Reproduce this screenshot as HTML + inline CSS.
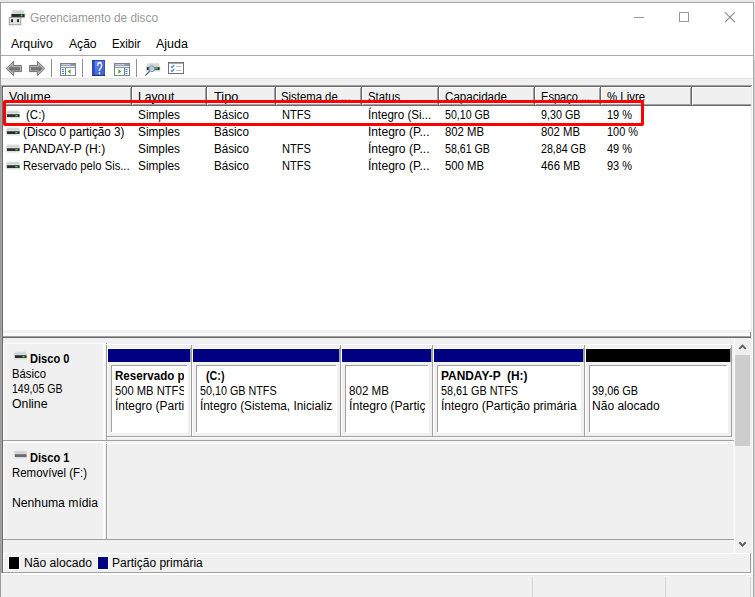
<!DOCTYPE html>
<html lang="pt-BR"><head><meta charset="utf-8"><title>Gerenciamento de disco</title>
<style>
html,body{margin:0;padding:0}
body{width:755px;height:597px;position:relative;overflow:hidden;background:#f0f0f0;font-family:"Liberation Sans", sans-serif;font-size:12px}
body>div,body>svg{position:absolute}
.t{line-height:16px;height:16px;white-space:pre}
</style></head><body>
<div style="left:0px;top:0px;width:755px;height:2px;background:#e6e6e6;"></div>
<div style="left:0px;top:2px;width:754px;height:1px;background:#a8a8a8;"></div>
<div style="left:1px;top:3px;width:752px;height:52px;background:#fff;"></div>
<div style="left:1px;top:55px;width:752px;height:1px;background:#a9a9a9;"></div>
<div style="left:1px;top:56px;width:752px;height:22px;background:#fff;"></div>
<div style="left:1px;top:78px;width:752px;height:1px;background:#e2e2e2;"></div>
<div style="left:0px;top:2px;width:1px;height:595px;background:#9a9a9a;"></div>
<div style="left:753px;top:2px;width:1px;height:595px;background:#a8a8a8;"></div>
<div style="left:754px;top:0px;width:1px;height:597px;background:#e9e9e9;"></div>
<div style="left:754px;top:60px;width:1px;height:537px;background:#cccccc;"></div>
<div style="left:752px;top:79px;width:1px;height:518px;background:#fbfbfb;"></div>
<div style="left:1px;top:85px;width:1px;height:488px;background:#a8a8a8;"></div>
<div style="left:2px;top:86px;width:1px;height:487px;background:#696969;"></div>
<div style="left:1px;top:85px;width:751px;height:1px;background:#a0a0a0;"></div>
<div style="left:2px;top:86px;width:749px;height:1px;background:#696969;"></div>
<div style="left:3px;top:87px;width:748px;height:243px;background:#fff;"></div>
<div style="left:751px;top:87px;width:1px;height:249px;background:#e8e8e8;"></div>
<div style="left:3px;top:87px;width:129px;height:19px;background:#f0f0f0;"></div>
<div style="left:3px;top:87px;width:129px;height:1px;background:#fff;"></div>
<div style="left:3px;top:87px;width:1px;height:19px;background:#fff;"></div>
<div style="left:4px;top:104px;width:128px;height:1px;background:#a0a0a0;"></div>
<div style="left:3px;top:105px;width:129px;height:1px;background:#696969;"></div>
<div style="left:130px;top:88px;width:1px;height:17px;background:#a0a0a0;"></div>
<div style="left:131px;top:87px;width:1px;height:19px;background:#696969;"></div>
<div style="left:132px;top:87px;width:75px;height:19px;background:#f0f0f0;"></div>
<div style="left:132px;top:87px;width:75px;height:1px;background:#fff;"></div>
<div style="left:132px;top:87px;width:1px;height:19px;background:#fff;"></div>
<div style="left:133px;top:104px;width:74px;height:1px;background:#a0a0a0;"></div>
<div style="left:132px;top:105px;width:75px;height:1px;background:#696969;"></div>
<div style="left:205px;top:88px;width:1px;height:17px;background:#a0a0a0;"></div>
<div style="left:206px;top:87px;width:1px;height:19px;background:#696969;"></div>
<div style="left:207px;top:87px;width:69px;height:19px;background:#f0f0f0;"></div>
<div style="left:207px;top:87px;width:69px;height:1px;background:#fff;"></div>
<div style="left:207px;top:87px;width:1px;height:19px;background:#fff;"></div>
<div style="left:208px;top:104px;width:68px;height:1px;background:#a0a0a0;"></div>
<div style="left:207px;top:105px;width:69px;height:1px;background:#696969;"></div>
<div style="left:274px;top:88px;width:1px;height:17px;background:#a0a0a0;"></div>
<div style="left:275px;top:87px;width:1px;height:19px;background:#696969;"></div>
<div style="left:276px;top:87px;width:86px;height:19px;background:#f0f0f0;"></div>
<div style="left:276px;top:87px;width:86px;height:1px;background:#fff;"></div>
<div style="left:276px;top:87px;width:1px;height:19px;background:#fff;"></div>
<div style="left:277px;top:104px;width:85px;height:1px;background:#a0a0a0;"></div>
<div style="left:276px;top:105px;width:86px;height:1px;background:#696969;"></div>
<div style="left:360px;top:88px;width:1px;height:17px;background:#a0a0a0;"></div>
<div style="left:361px;top:87px;width:1px;height:19px;background:#696969;"></div>
<div style="left:362px;top:87px;width:77px;height:19px;background:#f0f0f0;"></div>
<div style="left:362px;top:87px;width:77px;height:1px;background:#fff;"></div>
<div style="left:362px;top:87px;width:1px;height:19px;background:#fff;"></div>
<div style="left:363px;top:104px;width:76px;height:1px;background:#a0a0a0;"></div>
<div style="left:362px;top:105px;width:77px;height:1px;background:#696969;"></div>
<div style="left:437px;top:88px;width:1px;height:17px;background:#a0a0a0;"></div>
<div style="left:438px;top:87px;width:1px;height:19px;background:#696969;"></div>
<div style="left:439px;top:87px;width:96px;height:19px;background:#f0f0f0;"></div>
<div style="left:439px;top:87px;width:96px;height:1px;background:#fff;"></div>
<div style="left:439px;top:87px;width:1px;height:19px;background:#fff;"></div>
<div style="left:440px;top:104px;width:95px;height:1px;background:#a0a0a0;"></div>
<div style="left:439px;top:105px;width:96px;height:1px;background:#696969;"></div>
<div style="left:533px;top:88px;width:1px;height:17px;background:#a0a0a0;"></div>
<div style="left:534px;top:87px;width:1px;height:19px;background:#696969;"></div>
<div style="left:535px;top:87px;width:66px;height:19px;background:#f0f0f0;"></div>
<div style="left:535px;top:87px;width:66px;height:1px;background:#fff;"></div>
<div style="left:535px;top:87px;width:1px;height:19px;background:#fff;"></div>
<div style="left:536px;top:104px;width:65px;height:1px;background:#a0a0a0;"></div>
<div style="left:535px;top:105px;width:66px;height:1px;background:#696969;"></div>
<div style="left:599px;top:88px;width:1px;height:17px;background:#a0a0a0;"></div>
<div style="left:600px;top:87px;width:1px;height:19px;background:#696969;"></div>
<div style="left:601px;top:87px;width:91px;height:19px;background:#f0f0f0;"></div>
<div style="left:601px;top:87px;width:91px;height:1px;background:#fff;"></div>
<div style="left:601px;top:87px;width:1px;height:19px;background:#fff;"></div>
<div style="left:602px;top:104px;width:90px;height:1px;background:#a0a0a0;"></div>
<div style="left:601px;top:105px;width:91px;height:1px;background:#696969;"></div>
<div style="left:690px;top:88px;width:1px;height:17px;background:#a0a0a0;"></div>
<div style="left:691px;top:87px;width:1px;height:19px;background:#696969;"></div>
<div style="left:692px;top:87px;width:59px;height:19px;background:#f0f0f0;"></div>
<div style="left:692px;top:87px;width:59px;height:1px;background:#fff;"></div>
<div style="left:692px;top:87px;width:1px;height:19px;background:#fff;"></div>
<div style="left:693px;top:104px;width:58px;height:1px;background:#a0a0a0;"></div>
<div style="left:692px;top:105px;width:59px;height:1px;background:#696969;"></div>
<div style="left:3px;top:330px;width:748px;height:3px;background:#f0f0f0;"></div>
<div style="left:3px;top:333px;width:747px;height:3px;background:#fafafa;"></div>
<div style="left:750px;top:332px;width:1px;height:6px;background:#8c8c8c;"></div>
<div style="left:3px;top:336px;width:748px;height:1px;background:#a0a0a0;"></div>
<div style="left:3px;top:337px;width:748px;height:1px;background:#696969;"></div>
<div style="left:3px;top:343px;width:102px;height:1px;background:#fff;"></div>
<div style="left:3px;top:343px;width:1px;height:97px;background:#fff;"></div>
<div style="left:103px;top:343px;width:2px;height:97px;background:#fff;"></div>
<div style="left:106px;top:345px;width:1px;height:96px;background:#a0a0a0;"></div>
<div style="left:106px;top:343px;width:1px;height:1px;background:#a0a0a0;"></div>
<div style="left:107px;top:344px;width:627px;height:1px;background:#fff;"></div>
<div style="left:3px;top:442px;width:102px;height:1px;background:#fff;"></div>
<div style="left:3px;top:442px;width:1px;height:97px;background:#fff;"></div>
<div style="left:103px;top:442px;width:2px;height:97px;background:#fff;"></div>
<div style="left:106px;top:444px;width:1px;height:96px;background:#a0a0a0;"></div>
<div style="left:106px;top:442px;width:1px;height:1px;background:#a0a0a0;"></div>
<div style="left:107px;top:443px;width:627px;height:1px;background:#fff;"></div>
<div style="left:3px;top:440px;width:731px;height:1px;background:#a0a0a0;"></div>
<div style="left:3px;top:441px;width:731px;height:1px;background:#f8f8f8;"></div>
<div style="left:3px;top:539px;width:731px;height:1px;background:#a0a0a0;"></div>
<div style="left:107px;top:444px;width:1px;height:95px;background:#f8f8f8;"></div>
<div style="left:106px;top:345px;width:1px;height:92px;background:#a0a0a0;"></div>
<div style="left:107px;top:344px;width:1px;height:92px;background:#fff;"></div>
<div style="left:107px;top:348px;width:84px;height:1px;background:#fff;"></div>
<div style="left:108px;top:349px;width:82px;height:13px;background:#000080;"></div>
<div style="left:190px;top:348px;width:1px;height:14px;background:#a0a0a0;"></div>
<div style="left:108px;top:362px;width:82px;height:1px;background:#f5f5f5;"></div>
<div style="left:111px;top:365px;width:77px;height:68px;background:#fff;"></div>
<div style="left:111px;top:365px;width:76px;height:1px;background:#a0a0a0;"></div>
<div style="left:111px;top:365px;width:1px;height:67px;background:#a0a0a0;"></div>
<div style="left:191px;top:345px;width:1px;height:92px;background:#a0a0a0;"></div>
<div style="left:192px;top:344px;width:1px;height:92px;background:#fff;"></div>
<div style="left:192px;top:348px;width:148px;height:1px;background:#fff;"></div>
<div style="left:193px;top:349px;width:146px;height:13px;background:#000080;"></div>
<div style="left:339px;top:348px;width:1px;height:14px;background:#a0a0a0;"></div>
<div style="left:193px;top:362px;width:146px;height:1px;background:#f5f5f5;"></div>
<div style="left:196px;top:365px;width:141px;height:68px;background:#fff;"></div>
<div style="left:196px;top:365px;width:140px;height:1px;background:#a0a0a0;"></div>
<div style="left:196px;top:365px;width:1px;height:67px;background:#a0a0a0;"></div>
<div style="left:340px;top:345px;width:1px;height:92px;background:#a0a0a0;"></div>
<div style="left:341px;top:344px;width:1px;height:92px;background:#fff;"></div>
<div style="left:341px;top:348px;width:91px;height:1px;background:#fff;"></div>
<div style="left:342px;top:349px;width:89px;height:13px;background:#000080;"></div>
<div style="left:431px;top:348px;width:1px;height:14px;background:#a0a0a0;"></div>
<div style="left:342px;top:362px;width:89px;height:1px;background:#f5f5f5;"></div>
<div style="left:345px;top:365px;width:84px;height:68px;background:#fff;"></div>
<div style="left:345px;top:365px;width:83px;height:1px;background:#a0a0a0;"></div>
<div style="left:345px;top:365px;width:1px;height:67px;background:#a0a0a0;"></div>
<div style="left:432px;top:345px;width:1px;height:92px;background:#a0a0a0;"></div>
<div style="left:433px;top:344px;width:1px;height:92px;background:#fff;"></div>
<div style="left:433px;top:348px;width:151px;height:1px;background:#fff;"></div>
<div style="left:434px;top:349px;width:149px;height:13px;background:#000080;"></div>
<div style="left:583px;top:348px;width:1px;height:14px;background:#a0a0a0;"></div>
<div style="left:434px;top:362px;width:149px;height:1px;background:#f5f5f5;"></div>
<div style="left:437px;top:365px;width:144px;height:68px;background:#fff;"></div>
<div style="left:437px;top:365px;width:143px;height:1px;background:#a0a0a0;"></div>
<div style="left:437px;top:365px;width:1px;height:67px;background:#a0a0a0;"></div>
<div style="left:584px;top:345px;width:1px;height:92px;background:#a0a0a0;"></div>
<div style="left:585px;top:344px;width:1px;height:92px;background:#fff;"></div>
<div style="left:585px;top:348px;width:146px;height:1px;background:#fff;"></div>
<div style="left:586px;top:349px;width:144px;height:13px;background:#000;"></div>
<div style="left:730px;top:348px;width:1px;height:14px;background:#a0a0a0;"></div>
<div style="left:586px;top:362px;width:144px;height:1px;background:#f5f5f5;"></div>
<div style="left:589px;top:365px;width:139px;height:68px;background:#fff;"></div>
<div style="left:589px;top:365px;width:138px;height:1px;background:#a0a0a0;"></div>
<div style="left:589px;top:365px;width:1px;height:67px;background:#a0a0a0;"></div>
<div style="left:731px;top:345px;width:1px;height:92px;background:#a0a0a0;"></div>
<div style="left:106px;top:436px;width:626px;height:1px;background:#a0a0a0;"></div>
<div style="left:107px;top:437px;width:624px;height:1px;background:#fff;"></div>
<div style="left:734px;top:338px;width:1px;height:215px;background:#fff;"></div>
<div style="left:735px;top:338px;width:17px;height:215px;background:#f0f0f0;"></div>
<div style="left:735px;top:355px;width:15px;height:91px;background:#cdcdcd;"></div>
<svg style="left:737px;top:343px" width="11" height="8" viewBox="0 0 11 8"><path d="M2.3 5.9 L5.5 2.6 L8.7 5.9" fill="none" stroke="#606060" stroke-width="2"/></svg>
<svg style="left:737px;top:540px" width="11" height="8" viewBox="0 0 11 8"><path d="M2.3 2.3 L5.5 5.6 L8.7 2.3" fill="none" stroke="#606060" stroke-width="2"/></svg>
<div style="left:3px;top:553px;width:748px;height:1px;background:#fff;"></div>
<div style="left:3px;top:553px;width:1px;height:19px;background:#fff;"></div>
<div style="left:750px;top:553px;width:1px;height:20px;background:#a0a0a0;"></div>
<div style="left:3px;top:572px;width:748px;height:1px;background:#a0a0a0;"></div>
<div style="left:1px;top:573px;width:752px;height:24px;background:#f0f0f0;"></div>
<div style="left:1px;top:573px;width:752px;height:2px;background:#fdfdfd;"></div>
<div style="left:1px;top:575px;width:752px;height:1px;background:#ebebeb;"></div>
<div style="left:8px;top:556px;width:12px;height:14px;background:#fff;"></div>
<div style="left:9px;top:557px;width:10px;height:12px;background:#000;"></div>
<div style="left:97px;top:556px;width:12px;height:14px;background:#fff;"></div>
<div style="left:98px;top:557px;width:10px;height:12px;background:#000080;"></div>
<div style="left:532px;top:577px;width:1px;height:20px;background:#d7d7d7;"></div>
<div style="left:665px;top:577px;width:1px;height:20px;background:#d7d7d7;"></div>
<div style="left:750px;top:577px;width:1px;height:20px;background:#d7d7d7;"></div>
<div class="t" style="left:30.3px;top:10.34px;font-size:12px;color:#999;"><span style="display:inline-block;transform:scaleX(0.9840);transform-origin:0 0;white-space:pre">Gerenciamento de disco</span></div>
<div class="t" style="left:10.7px;top:35.84px;font-size:12px;color:#000;"><span style="display:inline-block;transform:scaleX(1.0298);transform-origin:0 0;white-space:pre">Arquivo</span></div>
<div class="t" style="left:68.5px;top:35.84px;font-size:12px;color:#000;"><span style="display:inline-block;transform:scaleX(1.0088);transform-origin:0 0;white-space:pre">Ação</span></div>
<div class="t" style="left:111.9px;top:35.84px;font-size:12px;color:#000;"><span style="display:inline-block;transform:scaleX(0.9495);transform-origin:0 0;white-space:pre">Exibir</span></div>
<div class="t" style="left:155.6px;top:35.84px;font-size:12px;color:#000;"><span style="display:inline-block;transform:scaleX(1.0357);transform-origin:0 0;white-space:pre">Ajuda</span></div>
<div class="t" style="left:9.0px;top:88.84px;font-size:12px;color:#000;"><span style="display:inline-block;transform:scaleX(1.0392);transform-origin:0 0;white-space:pre">Volume</span></div>
<div class="t" style="left:137.8px;top:88.84px;font-size:12px;color:#000;"><span style="display:inline-block;transform:scaleX(1.0102);transform-origin:0 0;white-space:pre">Layout</span></div>
<div class="t" style="left:213.9px;top:88.84px;font-size:12px;color:#000;"><span style="display:inline-block;transform:scaleX(1.0652);transform-origin:0 0;white-space:pre">Tipo</span></div>
<div class="t" style="left:281.3px;top:88.84px;font-size:12px;color:#000;"><span style="display:inline-block;transform:scaleX(0.9445);transform-origin:0 0;white-space:pre">Sistema de ...</span></div>
<div class="t" style="left:367.7px;top:88.84px;font-size:12px;color:#000;"><span style="display:inline-block;transform:scaleX(0.9433);transform-origin:0 0;white-space:pre">Status</span></div>
<div class="t" style="left:445.0px;top:88.84px;font-size:12px;color:#000;"><span style="display:inline-block;transform:scaleX(0.9678);transform-origin:0 0;white-space:pre">Capacidade</span></div>
<div class="t" style="left:540.8px;top:88.84px;font-size:12px;color:#000;"><span style="display:inline-block;transform:scaleX(0.9218);transform-origin:0 0;white-space:pre">Espaço ...</span></div>
<div class="t" style="left:606.9px;top:88.84px;font-size:12px;color:#000;"><span style="display:inline-block;transform:scaleX(0.9546);transform-origin:0 0;white-space:pre">% Livre</span></div>
<div class="t" style="left:26.1px;top:106.84px;font-size:12px;color:#000;"><span style="display:inline-block;transform:scaleX(0.9600);transform-origin:0 0;white-space:pre">(C:)</span></div>
<div class="t" style="left:137.6px;top:106.84px;font-size:12px;color:#000;"><span style="display:inline-block;transform:scaleX(0.9839);transform-origin:0 0;white-space:pre">Simples</span></div>
<div class="t" style="left:213.6px;top:106.84px;font-size:12px;color:#000;"><span style="display:inline-block;transform:scaleX(0.9686);transform-origin:0 0;white-space:pre">Básico</span></div>
<div class="t" style="left:281.7px;top:106.84px;font-size:12px;color:#000;"><span style="display:inline-block;transform:scaleX(0.9220);transform-origin:0 0;white-space:pre">NTFS</span></div>
<div class="t" style="left:367.9px;top:106.84px;font-size:12px;color:#000;"><span style="display:inline-block;transform:scaleX(0.9683);transform-origin:0 0;white-space:pre">Íntegro (Si...</span></div>
<div class="t" style="left:445.0px;top:106.84px;font-size:12px;color:#000;"><span style="display:inline-block;transform:scaleX(0.8836);transform-origin:0 0;white-space:pre">50,10 GB</span></div>
<div class="t" style="left:540.8px;top:106.84px;font-size:12px;color:#000;"><span style="display:inline-block;transform:scaleX(0.8948);transform-origin:0 0;white-space:pre">9,30 GB</span></div>
<div class="t" style="left:607.1px;top:106.84px;font-size:12px;color:#000;"><span style="display:inline-block;transform:scaleX(0.9138);transform-origin:0 0;white-space:pre">19 %</span></div>
<div class="t" style="left:22.8px;top:123.84px;font-size:12px;color:#000;"><span style="display:inline-block;transform:scaleX(0.9755);transform-origin:0 0;white-space:pre">(Disco 0 partição 3)</span></div>
<div class="t" style="left:137.6px;top:123.84px;font-size:12px;color:#000;"><span style="display:inline-block;transform:scaleX(0.9839);transform-origin:0 0;white-space:pre">Simples</span></div>
<div class="t" style="left:213.6px;top:123.84px;font-size:12px;color:#000;"><span style="display:inline-block;transform:scaleX(0.9686);transform-origin:0 0;white-space:pre">Básico</span></div>
<div class="t" style="left:367.9px;top:123.84px;font-size:12px;color:#000;"><span style="display:inline-block;transform:scaleX(1.0056);transform-origin:0 0;white-space:pre">Íntegro (P...</span></div>
<div class="t" style="left:445.0px;top:123.84px;font-size:12px;color:#000;"><span style="display:inline-block;transform:scaleX(0.9454);transform-origin:0 0;white-space:pre">802 MB</span></div>
<div class="t" style="left:540.8px;top:123.84px;font-size:12px;color:#000;"><span style="display:inline-block;transform:scaleX(0.9454);transform-origin:0 0;white-space:pre">802 MB</span></div>
<div class="t" style="left:607.1px;top:123.84px;font-size:12px;color:#000;"><span style="display:inline-block;transform:scaleX(0.9139);transform-origin:0 0;white-space:pre">100 %</span></div>
<div class="t" style="left:22.8px;top:140.84px;font-size:12px;color:#000;"><span style="display:inline-block;transform:scaleX(1.0076);transform-origin:0 0;white-space:pre">PANDAY-P (H:)</span></div>
<div class="t" style="left:137.6px;top:140.84px;font-size:12px;color:#000;"><span style="display:inline-block;transform:scaleX(0.9839);transform-origin:0 0;white-space:pre">Simples</span></div>
<div class="t" style="left:213.6px;top:140.84px;font-size:12px;color:#000;"><span style="display:inline-block;transform:scaleX(0.9686);transform-origin:0 0;white-space:pre">Básico</span></div>
<div class="t" style="left:281.7px;top:140.84px;font-size:12px;color:#000;"><span style="display:inline-block;transform:scaleX(0.9220);transform-origin:0 0;white-space:pre">NTFS</span></div>
<div class="t" style="left:367.9px;top:140.84px;font-size:12px;color:#000;"><span style="display:inline-block;transform:scaleX(1.0056);transform-origin:0 0;white-space:pre">Íntegro (P...</span></div>
<div class="t" style="left:445.0px;top:140.84px;font-size:12px;color:#000;"><span style="display:inline-block;transform:scaleX(0.8836);transform-origin:0 0;white-space:pre">58,61 GB</span></div>
<div class="t" style="left:540.8px;top:140.84px;font-size:12px;color:#000;"><span style="display:inline-block;transform:scaleX(0.8875);transform-origin:0 0;white-space:pre">28,84 GB</span></div>
<div class="t" style="left:607.1px;top:140.84px;font-size:12px;color:#000;"><span style="display:inline-block;transform:scaleX(0.9138);transform-origin:0 0;white-space:pre">49 %</span></div>
<div class="t" style="left:22.8px;top:157.84px;font-size:12px;color:#000;"><span style="display:inline-block;transform:scaleX(0.9346);transform-origin:0 0;white-space:pre">Reservado pelo Sis...</span></div>
<div class="t" style="left:137.6px;top:157.84px;font-size:12px;color:#000;"><span style="display:inline-block;transform:scaleX(0.9839);transform-origin:0 0;white-space:pre">Simples</span></div>
<div class="t" style="left:213.6px;top:157.84px;font-size:12px;color:#000;"><span style="display:inline-block;transform:scaleX(0.9686);transform-origin:0 0;white-space:pre">Básico</span></div>
<div class="t" style="left:281.7px;top:157.84px;font-size:12px;color:#000;"><span style="display:inline-block;transform:scaleX(0.9220);transform-origin:0 0;white-space:pre">NTFS</span></div>
<div class="t" style="left:367.9px;top:157.84px;font-size:12px;color:#000;"><span style="display:inline-block;transform:scaleX(1.0056);transform-origin:0 0;white-space:pre">Íntegro (P...</span></div>
<div class="t" style="left:445.0px;top:157.84px;font-size:12px;color:#000;"><span style="display:inline-block;transform:scaleX(0.9454);transform-origin:0 0;white-space:pre">500 MB</span></div>
<div class="t" style="left:540.8px;top:157.84px;font-size:12px;color:#000;"><span style="display:inline-block;transform:scaleX(0.9502);transform-origin:0 0;white-space:pre">466 MB</span></div>
<div class="t" style="left:607.1px;top:157.84px;font-size:12px;color:#000;"><span style="display:inline-block;transform:scaleX(0.9138);transform-origin:0 0;white-space:pre">93 %</span></div>
<div class="t" style="left:30.2px;top:350.84px;font-size:12px;color:#000;font-weight:bold;"><span style="display:inline-block;transform:scaleX(0.9230);transform-origin:0 0;white-space:pre">Disco 0</span></div>
<div class="t" style="left:12.1px;top:365.84px;font-size:12px;color:#000;"><span style="display:inline-block;transform:scaleX(0.9436);transform-origin:0 0;white-space:pre">Básico</span></div>
<div class="t" style="left:12.1px;top:380.84px;font-size:12px;color:#000;"><span style="display:inline-block;transform:scaleX(0.8802);transform-origin:0 0;white-space:pre">149,05 GB</span></div>
<div class="t" style="left:12.1px;top:395.84px;font-size:12px;color:#000;"><span style="display:inline-block;transform:scaleX(1.0234);transform-origin:0 0;white-space:pre">Online</span></div>
<div class="t" style="left:30.2px;top:449.84px;font-size:12px;color:#000;font-weight:bold;"><span style="display:inline-block;transform:scaleX(0.9230);transform-origin:0 0;white-space:pre">Disco 1</span></div>
<div class="t" style="left:11.8px;top:464.84px;font-size:12px;color:#000;"><span style="display:inline-block;transform:scaleX(0.9531);transform-origin:0 0;white-space:pre">Removível (F:)</span></div>
<div class="t" style="left:11.8px;top:494.84px;font-size:12px;color:#000;"><span style="display:inline-block;transform:scaleX(1.0163);transform-origin:0 0;white-space:pre">Nenhuma mídia</span></div>
<div class="t" style="left:114.9px;top:367.84px;font-size:12px;color:#000;font-weight:bold;width:69.1px;overflow:hidden;"><span style="display:inline-block;transform:scaleX(0.9662);transform-origin:0 0;white-space:pre">Reservado pelo Sistema</span></div>
<div class="t" style="left:114.9px;top:382.84px;font-size:12px;color:#000;width:69.1px;overflow:hidden;"><span style="display:inline-block;transform:scaleX(0.9325);transform-origin:0 0;white-space:pre">500 MB NTFS</span></div>
<div class="t" style="left:114.9px;top:397.84px;font-size:12px;color:#000;width:69.1px;overflow:hidden;"><span style="display:inline-block;transform:scaleX(0.9975);transform-origin:0 0;white-space:pre">Íntegro (Partição primária)</span></div>
<div class="t" style="left:206.0px;top:367.84px;font-size:12px;color:#000;font-weight:bold;"><span style="display:inline-block;transform:scaleX(0.8956);transform-origin:0 0;white-space:pre">(C:)</span></div>
<div class="t" style="left:199.9px;top:382.84px;font-size:12px;color:#000;"><span style="display:inline-block;transform:scaleX(0.8972);transform-origin:0 0;white-space:pre">50,10 GB NTFS</span></div>
<div class="t" style="left:199.9px;top:397.84px;font-size:12px;color:#000;width:133.1px;overflow:hidden;"><span style="display:inline-block;transform:scaleX(0.9861);transform-origin:0 0;white-space:pre">Íntegro (Sistema, Inicialização, Arquivo)</span></div>
<div class="t" style="left:348.6px;top:382.84px;font-size:12px;color:#000;"><span style="display:inline-block;transform:scaleX(0.9647);transform-origin:0 0;white-space:pre">802 MB</span></div>
<div class="t" style="left:348.6px;top:397.84px;font-size:12px;color:#000;width:76.4px;overflow:hidden;"><span style="display:inline-block;transform:scaleX(1.0163);transform-origin:0 0;white-space:pre">Íntegro (Partição de Recuperação)</span></div>
<div class="t" style="left:440.8px;top:367.84px;font-size:12px;color:#000;font-weight:bold;"><span style="display:inline-block;transform:scaleX(0.9928);transform-origin:0 0;white-space:pre">PANDAY-P  (H:)</span></div>
<div class="t" style="left:440.8px;top:382.84px;font-size:12px;color:#000;"><span style="display:inline-block;transform:scaleX(0.9019);transform-origin:0 0;white-space:pre">58,61 GB NTFS</span></div>
<div class="t" style="left:440.8px;top:397.84px;font-size:12px;color:#000;"><span style="display:inline-block;transform:scaleX(1.0015);transform-origin:0 0;white-space:pre">Íntegro (Partição primária</span></div>
<div class="t" style="left:591.5px;top:382.84px;font-size:12px;color:#000;"><span style="display:inline-block;transform:scaleX(0.9092);transform-origin:0 0;white-space:pre">39,06 GB</span></div>
<div class="t" style="left:591.5px;top:397.84px;font-size:12px;color:#000;"><span style="display:inline-block;transform:scaleX(1.0031);transform-origin:0 0;white-space:pre">Não alocado</span></div>
<div class="t" style="left:23.5px;top:554.84px;font-size:12px;color:#000;"><span style="display:inline-block;transform:scaleX(1.0105);transform-origin:0 0;white-space:pre">Não alocado</span></div>
<div class="t" style="left:111.5px;top:554.84px;font-size:12px;color:#000;"><span style="display:inline-block;transform:scaleX(1.0011);transform-origin:0 0;white-space:pre">Partição primária</span></div>
<div style="left:3px;top:100px;width:635px;height:20px;border:3px solid #f00;border-radius:2px;box-sizing:content-box"></div>
<svg width="0" height="0" style="left:0;top:0"><defs>
<linearGradient id="ga" x1="0" y1="0" x2="0" y2="1"><stop offset="0" stop-color="#9c9c9c"/><stop offset=".6" stop-color="#6e6e6e"/><stop offset="1" stop-color="#8a8a8a"/></linearGradient>
<linearGradient id="gh" x1="0" y1="0" x2="1" y2="1"><stop offset="0" stop-color="#6d8fec"/><stop offset="1" stop-color="#3557cb"/></linearGradient>
<linearGradient id="gd" x1="0" y1="0" x2="0" y2="1"><stop offset="0" stop-color="#e1e3e7"/><stop offset="1" stop-color="#c3c6cc"/></linearGradient>
</defs></svg>
<svg style="left:8px;top:9px" width="18" height="17" viewBox="0 0 18 17"><path d="M4.6 1 L15.2 1 L16.6 4.8 L3.4 4.8 Z" fill="url(#gd)"/><rect x="2.8" y="4.6" width="14.4" height="4.6" rx=".8" fill="#d9dbdf"/><rect x="3.4" y="5" width="13.2" height="3.2" rx=".5" fill="#2b2b2b"/><circle cx="13.6" cy="6.6" r="1" fill="#37e23c"/><rect x="1.2" y="8.3" width="11.6" height="7.5" fill="#e4e4e6" stroke="#8d8d90" stroke-width=".8"/><rect x="3.2" y="10.2" width="1.7" height="3" fill="#111"/><rect x="9.2" y="10.2" width="1.7" height="3" fill="#111"/></svg>
<svg style="left:634px;top:12px" width="12" height="12" viewBox="0 0 12 12"><path d="M0 5.5 H10" stroke="#999" stroke-width="1" fill="none"/></svg>
<svg style="left:679px;top:12px" width="12" height="12" viewBox="0 0 12 12"><rect x="0.5" y="0.5" width="9" height="9" stroke="#999" stroke-width="1" fill="none"/></svg>
<svg style="left:725px;top:12px" width="12" height="12" viewBox="0 0 12 12"><path d="M0 0.3 L9.8 10.1 M9.8 0.3 L0 10.1" stroke="#8e8e8e" stroke-width="1.15" fill="none"/></svg>
<svg style="left:5px;top:60px" width="18" height="17" viewBox="0 0 18 17"><path d="M1.2 8.5 L8.6 1.3 L8.6 5.4 L16.4 5.4 L16.4 11.6 L8.6 11.6 L8.6 15.7 Z" fill="#b9b9b9" stroke="#707070" stroke-width="1" stroke-linejoin="round"/><path d="M3.4 8.5 L7.4 4.6 L7.4 6.8 L15 6.8 L15 10.4 L7.4 10.4 L7.4 12.4 Z" fill="url(#ga)"/></svg>
<svg style="left:28px;top:60px" width="18" height="17" viewBox="0 0 18 17"><path d="M16.8 8.5 L9.4 1.3 L9.4 5.4 L1.6 5.4 L1.6 11.6 L9.4 11.6 L9.4 15.7 Z" fill="#b9b9b9" stroke="#707070" stroke-width="1" stroke-linejoin="round"/><path d="M14.6 8.5 L10.6 4.6 L10.6 6.8 L3 6.8 L3 10.4 L10.6 10.4 L10.6 12.4 Z" fill="url(#ga)"/></svg>
<div style="left:51px;top:59px;width:1px;height:18px;background:#8f8f8f"></div>
<div style="left:82px;top:59px;width:1px;height:18px;background:#8f8f8f"></div>
<div style="left:136px;top:59px;width:1px;height:18px;background:#8f8f8f"></div>
<svg style="left:60px;top:63px" width="16" height="13" viewBox="0 0 16 13"><rect x="0.5" y="0.5" width="15" height="12" fill="#fff" stroke="#7b8494"/><rect x="1" y="1" width="14" height="2" fill="#8e96a6"/><rect x="1.5" y="1.3" width="9" height=".9" fill="#dfe3ea"/><rect x="1" y="3" width="14" height="1" fill="#e9ecf1"/><rect x="1" y="4" width="14" height="1" fill="#8e96a6"/><rect x="5" y="5" width="1" height="7" fill="#6d7a94"/><rect x="2" y="6" width="2" height="1" fill="#3c7bd6"/><rect x="2" y="8" width="2" height="1" fill="#3c7bd6"/><rect x="2" y="10" width="2" height="1" fill="#3c7bd6"/><path d="M10.6 6.3 L10.6 10.7 L7.6 8.5 Z" fill="#3cb521"/></svg>
<svg style="left:114px;top:63px" width="16" height="13" viewBox="0 0 16 13"><rect x="0.5" y="0.5" width="15" height="12" fill="#fff" stroke="#7b8494"/><rect x="1" y="1" width="14" height="2" fill="#8e96a6"/><rect x="1.5" y="1.3" width="9" height=".9" fill="#dfe3ea"/><rect x="1" y="3" width="14" height="1" fill="#e9ecf1"/><rect x="1" y="4" width="14" height="1" fill="#8e96a6"/><rect x="10" y="5" width="1" height="7" fill="#6d7a94"/><rect x="11.5" y="6" width="2" height="1" fill="#3c7bd6"/><rect x="11.5" y="8" width="2" height="1" fill="#3c7bd6"/><rect x="11.5" y="10" width="2" height="1" fill="#3c7bd6"/><path d="M4.4 6.3 L4.4 10.7 L7.4 8.5 Z" fill="#3cb521"/></svg>
<svg style="left:92px;top:60px" width="13" height="16" viewBox="0 0 13 16"><rect x="0" y="0" width="13" height="16" fill="url(#gh)"/><rect x="0" y="0" width="2.8" height="16" fill="#2a4bbf"/><rect x="0" y="0" width="13" height="1" fill="#2343b6"/><rect x="12" y="0" width="1" height="16" fill="#2f52c4"/><rect x="0" y="15" width="13" height="1" fill="#1c2f7c"/><text transform="translate(8.4 14.2) scale(.64 1)" font-family="Liberation Sans, sans-serif" font-size="16" fill="#1e2f75" text-anchor="middle">?</text><text transform="translate(7.7 13.7) scale(.64 1)" font-family="Liberation Sans, sans-serif" font-size="16" fill="#fff" stroke="#fff" stroke-width=".4" text-anchor="middle">?</text></svg>
<svg style="left:144px;top:62px" width="18" height="15" viewBox="0 0 18 15"><path d="M3.6 1 L14.8 1 L15.6 4.6 L2.6 4.6 Z" fill="url(#gd)"/><rect x="2" y="4.4" width="14.4" height="5" rx=".6" fill="#d8dadd"/><rect x="2.8" y="5" width="12.8" height="3" fill="#3a3a3a"/><rect x="11" y="5.4" width="2.6" height="1.8" fill="#2fe23a"/><circle cx="7.8" cy="6.8" r="2.9" fill="#b4cfea" stroke="#7d8ea3" stroke-width=".9"/><path d="M5.6 9.2 L1.4 13.6" stroke="#5d6876" stroke-width="1.3"/></svg>
<svg style="left:168px;top:62px" width="16" height="12" viewBox="0 0 16 12"><rect x="0.5" y="0.5" width="15" height="11" fill="#fff" stroke="#737373"/><rect x="0" y="0" width="16" height="1.6" fill="#737373"/><path d="M3 4.3 L4.1 5.5 L6.2 2.8 M3 8.3 L4.1 9.5 L6.2 6.8" stroke="#2b8ce8" stroke-width="1.15" fill="none"/><path d="M8 4.5 H13 M8 8.5 H13" stroke="#c2c2c2" stroke-width="1"/></svg>
<svg style="left:6px;top:110px" width="14" height="9" viewBox="0 0 14 9"><path d="M1.2 0.4 L12.8 0.4 L14 3.6 L0 3.6 Z" fill="url(#gd)"/><rect x="0" y="3.6" width="14" height="1" fill="#d5d7db"/><rect x="0.8" y="4.2" width="12.8" height="3" fill="#2e2e2e"/><rect x="0" y="7.2" width="14" height="1.3" fill="#dcdee1"/><rect x="9.4" y="5" width="2.2" height="1.4" fill="#30e03a"/></svg>
<svg style="left:6px;top:127px" width="14" height="9" viewBox="0 0 14 9"><path d="M1.2 0.4 L12.8 0.4 L14 3.6 L0 3.6 Z" fill="url(#gd)"/><rect x="0" y="3.6" width="14" height="1" fill="#d5d7db"/><rect x="0.8" y="4.2" width="12.8" height="3" fill="#2e2e2e"/><rect x="0" y="7.2" width="14" height="1.3" fill="#dcdee1"/><rect x="9.4" y="5" width="2.2" height="1.4" fill="#30e03a"/></svg>
<svg style="left:6px;top:144px" width="14" height="9" viewBox="0 0 14 9"><path d="M1.2 0.4 L12.8 0.4 L14 3.6 L0 3.6 Z" fill="url(#gd)"/><rect x="0" y="3.6" width="14" height="1" fill="#d5d7db"/><rect x="0.8" y="4.2" width="12.8" height="3" fill="#2e2e2e"/><rect x="0" y="7.2" width="14" height="1.3" fill="#dcdee1"/><rect x="9.4" y="5" width="2.2" height="1.4" fill="#30e03a"/></svg>
<svg style="left:6px;top:161px" width="14" height="9" viewBox="0 0 14 9"><path d="M1.2 0.4 L12.8 0.4 L14 3.6 L0 3.6 Z" fill="url(#gd)"/><rect x="0" y="3.6" width="14" height="1" fill="#d5d7db"/><rect x="0.8" y="4.2" width="12.8" height="3" fill="#2e2e2e"/><rect x="0" y="7.2" width="14" height="1.3" fill="#dcdee1"/><rect x="9.4" y="5" width="2.2" height="1.4" fill="#30e03a"/></svg>
<svg style="left:14px;top:351px" width="13" height="9" viewBox="0 0 13 9"><path d="M1.2 0.4 L11.8 0.4 L13 3.6 L0 3.6 Z" fill="url(#gd)"/><rect x="0" y="3.6" width="13" height="1" fill="#d5d7db"/><rect x="0.8" y="4.2" width="11.8" height="3" fill="#2e2e2e"/><rect x="0" y="7.2" width="13" height="1.3" fill="#dcdee1"/><rect x="8.4" y="5" width="2.2" height="1.4" fill="#30e03a"/></svg>
<svg style="left:14px;top:450px" width="13" height="9" viewBox="0 0 13 9"><path d="M1.2 0.4 L11.8 0.4 L13 3.6 L0 3.6 Z" fill="url(#gd)"/><rect x="0" y="3.6" width="13" height="1" fill="#d5d7db"/><rect x="0.8" y="4.2" width="11.8" height="3" fill="#6a6a6a"/><rect x="0" y="7.2" width="13" height="1.3" fill="#dcdee1"/></svg>
</body></html>
